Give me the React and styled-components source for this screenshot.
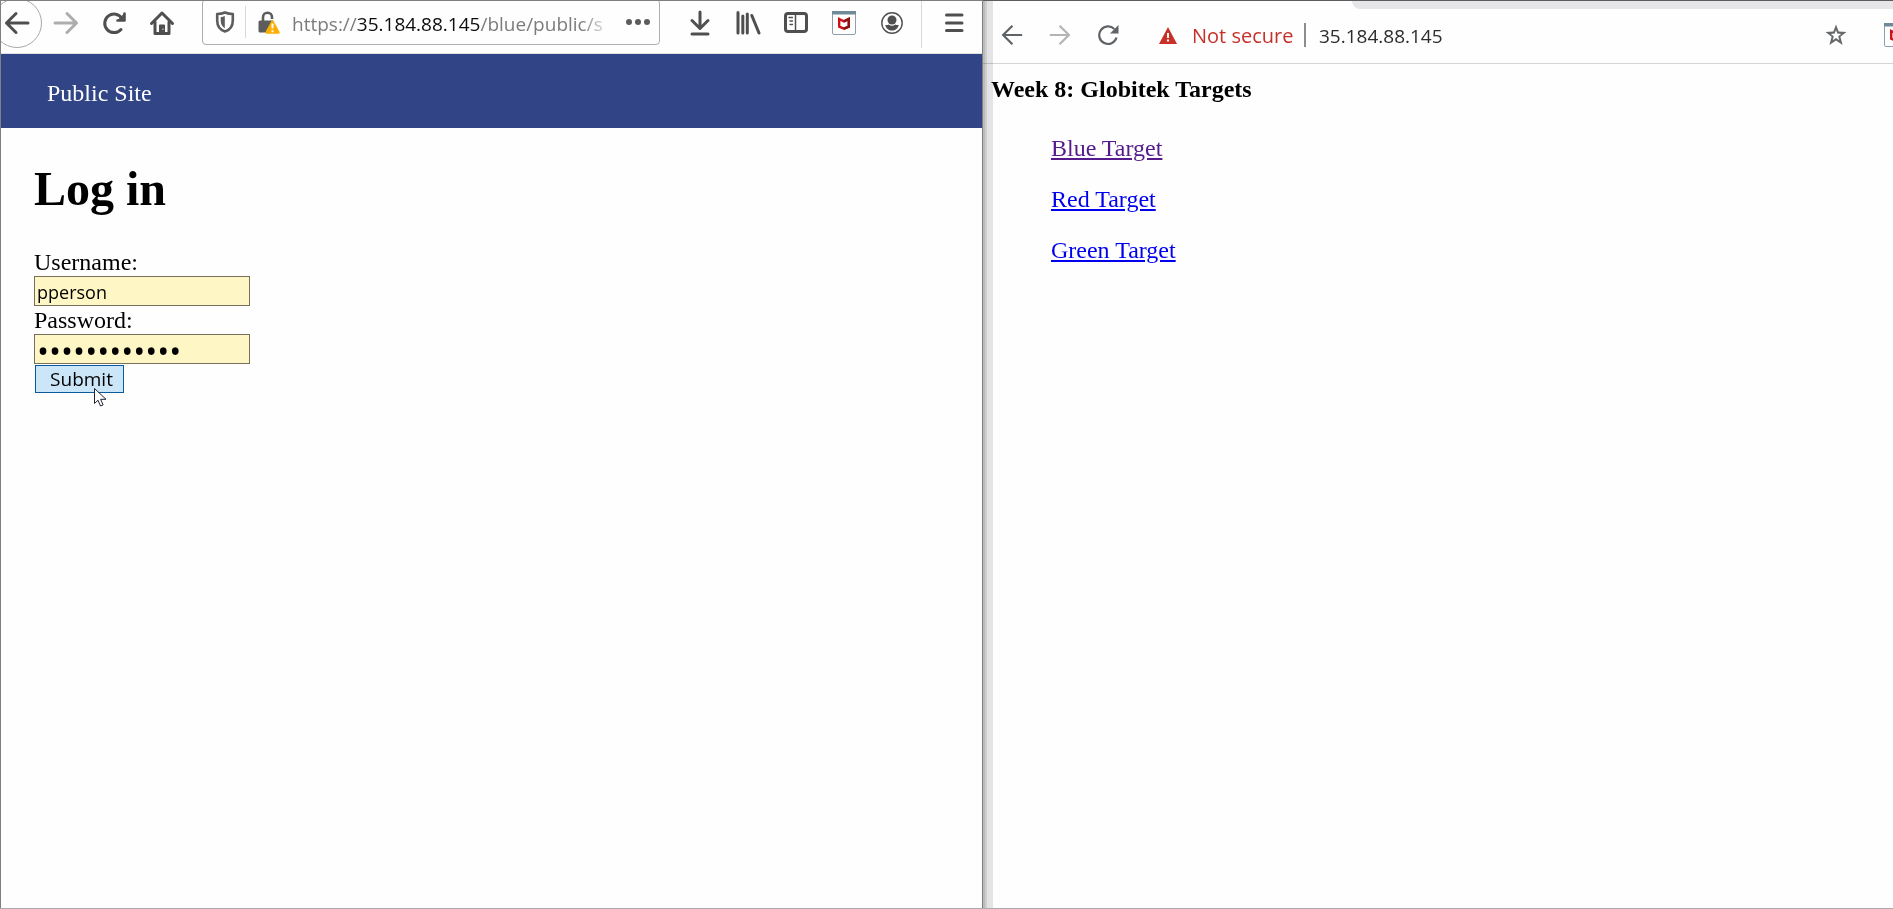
import React from "react";
import styled, { createGlobalStyle } from "styled-components";

const serif = '"Liberation Serif", "Times New Roman", serif';
const sans = '"Open Sans", "Noto Sans", sans-serif';

const GlobalStyle = createGlobalStyle`
  *, *::before, *::after { box-sizing: border-box; }
  html, body { margin: 0; background: #fefefe; }
  body { font-family: ${serif}; font-size: 24px; line-height: 28px; color: #000; }
`;

const Desktop = styled.div`
  display: flex;
  min-height: 100vh;
  overflow: hidden;
  border-bottom: 1px solid #aaa;
`;

const FirefoxWindow = styled.section`
  flex: 982 1 0;
  min-width: 0;
  border: solid #7f7f7f;
  border-width: 1px 1px 0 1px;
  overflow: hidden;
`;

const ChromeWindow = styled.section`
  position: relative;
  flex: 911 1 0;
  min-width: 0;
  border-top: 1px solid #5f5b5e;
  overflow: hidden;

  &::before {
    content: "";
    position: absolute;
    inset: 0 auto 0 0;
    width: 10px;
    background: linear-gradient(to right, #bdbdbe 2px, #cfcfd0 2px 4px, #e5e5e8 4px);
    mix-blend-mode: multiply;
    pointer-events: none;
  }
`;

const FirefoxBar = styled.header`
  display: flex;
  height: 53px;
  padding-right: 4px;
  border-bottom: 1px solid #e0e0e2;
`;

const ChromeBar = styled.header`
  display: flex;
  align-items: center;
  height: 63px;
  padding: 6px 0 0 5px;
  border-bottom: 1px solid #d4d5d7;
`;

const TabStrip = styled.div`
  position: absolute;
  top: 0;
  right: 0;
  width: 541px;
  height: 8px;
  background: #e6e6e9;
  border-bottom-left-radius: 8px;
`;

const ToolButton = styled.button`
  display: flex;
  align-items: center;
  justify-content: center;
  flex: none;
  width: 48px;
  height: 44px;
  padding: 0;
  border: 0;
  background: none;
  color: ${(p) => p.$color || "#4f4f50"};
  svg { display: block; flex: none; }
`;

const BackButton = styled(ToolButton)`
  width: 50px;
  height: 50px;
  margin: -3px 0 0 -9px;
  border: 1px solid #a8a8a9;
  border-radius: 50%;
`;

const Divider = styled.span`
  flex: none;
  width: ${(p) => p.$width || 1}px;
  height: ${(p) => p.$height}px;
  margin: ${(p) => p.$margin};
  background: ${(p) => p.$color || "#d8d8da"};
`;

const AddressBox = styled.div`
  display: flex;
  align-items: center;
  flex: 1;
  min-width: 0;
  height: 46px;
  margin: -2px 16px 0;
  padding-left: 12px;
  border: 1px solid #aeaeb0;
  border-radius: 4px;
  color: #5c5c5d;
  > svg { flex: none; }
`;

const Address = styled.div`
  flex: 1;
  min-width: 0;
  margin-left: 12px;
  padding-top: 3px;
  white-space: nowrap;
  font: 19px/28px ${sans};
  color: #7c7c7d;
  mask-image: linear-gradient(to left, transparent, #000 32px);
  strong { font-weight: 400; color: #0c0c0d; }
`;

const MoreButton = styled(ToolButton)`
  width: 42px;
  margin-left: 4px;
  color: #5c5c5d;
`;

const SiteNav = styled.nav`
  padding: 25px 46px 21px;
  background: #304486;
  a { color: #fff; text-decoration: none; }
`;

const LoginPage = styled.main`
  padding: 0 33px;
  h1 { margin: 33px 0 31px; font-size: 48px; line-height: 56px; }
`;

const LoginForm = styled.form`
  display: flex;
  flex-direction: column;
  align-items: flex-start;
`;

const Field = styled.input`
  width: 216px;
  height: 30px;
  padding: 2px 2px 0;
  border: 1px solid #7a705a;
  border-radius: 0;
  outline: 0;
  background: #fff6c5;
  color: #000;
  font: 18px/26px ${sans};
  &[type="password"] { font-size: 32px; }
`;

const SubmitRow = styled.div`
  position: relative;
  padding: 1px;
`;

const SubmitButton = styled.button`
  display: block;
  width: 89px;
  height: 28px;
  padding: 1px 10px 0 14px;
  border: 1px solid #0a5a9e;
  background: #cce6f9;
  color: #000;
  font: 19px/25px ${sans};
`;

const Pointer = styled.svg`
  position: absolute;
  left: 60px;
  top: 24px;
`;

const Security = styled.span`
  width: 112px;
  padding-top: 2px;
  margin-left: 15px;
  font: 20px/28px ${sans};
  color: #c5302a;
`;

const ChromeAddress = styled.input`
  flex: 1;
  min-width: 0;
  padding: 2px 0 0;
  border: 0;
  outline: 0;
  background: none;
  color: #2b2c2e;
  font: 19px/28px ${sans};
`;

const Extension = styled(ToolButton)`
  width: 9px;
  margin-left: 24px;
  justify-content: flex-start;
`;

const TargetPage = styled.main`
  padding: 11px 8px;
  h1 { margin: 0; font-size: 24px; line-height: 28px; }
`;

const TargetList = styled.ul`
  display: flex;
  flex-direction: column;
  gap: 23px;
  margin: 31px 0 0;
  padding: 0 0 0 60px;
  list-style: none;
`;

const TargetLink = styled.a`
  color: ${(p) => (p.$visited ? "#551a8b" : "#0000ee")};
  text-decoration: underline;
`;

const Stroke = ({ size = 26, width = 3, children, ...rest }) => (
  <svg width={size} height={size} viewBox="0 0 26 26" fill="none" stroke="currentColor"
    strokeWidth={width} strokeLinecap="round" strokeLinejoin="round" aria-hidden="true" {...rest}>
    {children}
  </svg>
);

const ArrowLeft = () => <Stroke><path d="M24 13H2.500M12 3.500L2.500 13l9.500 9.500" /></Stroke>;
const ArrowRight = () => <Stroke><path d="M2 13h21.500M14 3.500l9.500 9.500-9.500 9.500" /></Stroke>;

const Reload = () => (
  <Stroke>
    <path d="M20 19.500A9.300 9.300 0 1 1 21 8.500" />
    <path d="M23.500 3.500v7H16.500" strokeWidth="2.600" />
    <path d="M23.500 4v6.500H17z" fill="currentColor" strokeWidth="1" />
  </Stroke>
);

const Home = () => (
  <Stroke>
    <path d="M2.500 13.500L13 3l10.500 10.500" />
    <path d="M6 12v11.500h14V12" />
    <path d="M10.500 23v-8h5v8z" fill="currentColor" strokeWidth="1" />
    <path d="M14 19v.5" stroke="#fff" strokeWidth="1" />
  </Stroke>
);

const Shield = () => (
  <svg width="20" height="22" viewBox="0 0 20 22" fill="none" aria-hidden="true">
    <path d="M10 1.500c3 1.200 5 1.500 7.800 1.500v6.500c0 5.500-3 9.500-7.800 11-4.800-1.500-7.800-5.500-7.800-11V3c2.800 0 4.800-.3 7.800-1.500z" stroke="currentColor" strokeWidth="2.600" strokeLinejoin="round" />
    <path d="M9.800 5v12.200C7 15.700 5.700 13 5.700 9.800V6.300c1.500-.2 2.800-.6 4.100-1.300z" fill="currentColor" />
  </svg>
);

const InsecureLock = () => (
  <svg width="22" height="24" viewBox="0 0 22 24" fill="none" aria-hidden="true">
    <path d="M5 11V7.200a4.500 4.500 0 0 1 9 0V9" stroke="currentColor" strokeWidth="2.600" />
    <path d="M2 10.500h13v12H2a1.500 1.500 0 0 1-1.500-1.500v-9A1.500 1.500 0 0 1 2 10.500z" fill="currentColor" />
    <path d="M14.500 11.500l6 11h-12z" fill="#fcae00" stroke="#fcae00" strokeWidth="2.500" strokeLinejoin="round" />
    <path d="M14.500 13.500v5M14.500 20.300v2" stroke="#fff" strokeWidth="2" />
  </svg>
);

const Dots = () => (
  <svg width="24" height="6" viewBox="0 0 24 6" fill="currentColor" aria-hidden="true">
    <circle cx="3" cy="3" r="3" /><circle cx="12" cy="3" r="3" /><circle cx="21" cy="3" r="3" />
  </svg>
);

const Download = () => <Stroke><path d="M13 2v15.500M5 10.500l8 8 8-8M5 24h16" /></Stroke>;

const Library = () => (
  <Stroke><path d="M3 2.500v20.500M7.800 6v17M12.300 4v19" /><path d="M16.800 5.500L24 23" /></Stroke>
);

const SidebarIcon = () => (
  <Stroke>
    <rect x="2.500" y="3.500" width="21" height="18" rx="2.500" />
    <path d="M12.500 4v17" strokeWidth="1.500" />
    <path d="M6 7.500h3.500M7 11h2.500M7 14.500h2.500" strokeWidth="1.300" />
  </Stroke>
);

const McAfee = () => (
  <svg width="24" height="24" viewBox="0 0 24 24" aria-hidden="true">
    <rect x=".5" y=".5" width="23" height="23" rx="1.500" fill="#fff" stroke="#90a0aa" />
    <path d="M0 0h24v3.500H0z" fill="#6f8b99" />
    <path d="M7.200 8l4.800 2.300 4.800-2.300v7.700L12 17.600l-4.800-1.900z" fill="none" stroke="#cc1119" strokeWidth="2.400" />
    <path d="M12 10.300l4.800-2.300v7.700L12 17.600" fill="none" stroke="#8e1116" strokeWidth="2.400" />
  </svg>
);

const Account = () => (
  <svg width="24" height="24" viewBox="0 0 24 24" aria-hidden="true">
    <circle cx="12" cy="12" r="10.200" fill="none" stroke="currentColor" strokeWidth="1.400" />
    <circle cx="12" cy="9" r="4.500" fill="currentColor" />
    <path d="M5.300 14c1.300.2 2.700 0 3.500-.5 2 1.600 4.400 1.600 6.400 0 .8.500 2.200.7 3.500.5-.5 3.500-3.500 5.500-6.700 5.500S5.800 17.500 5.300 14z" fill="currentColor" />
  </svg>
);

const Menu = () => <Stroke><path d="M5.500 5h15.500M5.500 13h15.500M5.500 20.500h15.500" /></Stroke>;

const ThinLeft = () => <Stroke size={22} strokeLinecap="butt" strokeLinejoin="miter" width={2.600}><path d="M25 13H3M13.500 2L2.500 13l11 11" /></Stroke>;
const ThinRight = () => <Stroke size={22} strokeLinecap="butt" strokeLinejoin="miter" width={2.600}><path d="M1 13h22M12.500 2l11 11-11 11" /></Stroke>;

const ChromeReload = () => (
  <svg width="22" height="22" viewBox="0 0 22 22" fill="none" aria-hidden="true">
    <path d="M19.500 13.500A8.800 8.800 0 1 1 17.300 5" stroke="currentColor" strokeWidth="2.200" />
    <path d="M21.500 1v8.500H13z" fill="currentColor" />
  </svg>
);

const Warning = () => (
  <svg width="18" height="17" viewBox="0 0 18 17" aria-hidden="true">
    <path d="M9 0l9 17H0z" fill="#c93027" />
    <path d="M9 6v5M9 12.500v2" stroke="#fff" strokeWidth="2" />
  </svg>
);

const Star = () => (
  <svg width="22" height="22" viewBox="0 0 22 22" fill="currentColor" aria-hidden="true">
    <path fillRule="evenodd" d="M11 .5l2.700 7.100 7.800.4-6.100 4.800 2.200 8.200-6.600-4.500L4.400 21l2.200-8.200L.5 8l7.800-.4zM11 6l-1.300 3.600-3.900.3 3 2.400-1.100 4L11 14.100l3.300 2.200-1.100-4 3-2.400-3.900-.3z" />
  </svg>
);

export default function App() {
  return (
    <>
      <GlobalStyle />
      <Desktop>
        <FirefoxWindow>
          <FirefoxBar>
            <BackButton aria-label="Back"><ArrowLeft /></BackButton>
            <ToolButton aria-label="Forward" $color="#adadae"><ArrowRight /></ToolButton>
            <ToolButton aria-label="Reload"><Reload /></ToolButton>
            <ToolButton aria-label="Home"><Home /></ToolButton>
            <AddressBox>
              <Shield />
              <Divider $height={32} $margin="0 12px 0 10px" />
              <InsecureLock />
              <Address>https://<strong>35.184.88.145</strong>/blue/public/s</Address>
              <MoreButton aria-label="Page actions"><Dots /></MoreButton>
            </AddressBox>
            <ToolButton aria-label="Downloads"><Download /></ToolButton>
            <ToolButton aria-label="Library"><Library /></ToolButton>
            <ToolButton aria-label="Sidebars"><SidebarIcon /></ToolButton>
            <ToolButton aria-label="McAfee"><McAfee /></ToolButton>
            <ToolButton aria-label="Account"><Account /></ToolButton>
            <Divider $height={47} $margin="0 8px 0 5px" />
            <ToolButton aria-label="Menu"><Menu /></ToolButton>
          </FirefoxBar>
          <SiteNav><a href="#public">Public Site</a></SiteNav>
          <LoginPage>
            <h1>Log in</h1>
            <LoginForm onSubmit={(e) => e.preventDefault()}>
              <label htmlFor="username">Username:</label>
              <Field id="username" defaultValue="pperson" />
              <label htmlFor="password">Password:</label>
              <Field id="password" type="password" defaultValue="abcdefghijkl" />
              <SubmitRow>
                <SubmitButton type="submit">Submit</SubmitButton>
                <Pointer width="13" height="19" viewBox="0 0 13 19" aria-hidden="true">
                  <path d="M.5.5v15l3.500-3.300 2.500 5.800 2.600-1.100-2.500-5.600H12z" fill="#fff" stroke="#223" strokeWidth="1" />
                </Pointer>
              </SubmitRow>
            </LoginForm>
          </LoginPage>
        </FirefoxWindow>
        <ChromeWindow>
          <TabStrip />
          <ChromeBar>
            <ToolButton aria-label="Back" $color="#5f6368"><ThinLeft /></ToolButton>
            <ToolButton aria-label="Forward" $color="#b2b4b6"><ThinRight /></ToolButton>
            <ToolButton aria-label="Reload" $color="#5f6368"><ChromeReload /></ToolButton>
            <Divider $height={0} $margin="0 13px" />
            <Warning />
            <Security>Not secure</Security>
            <Divider $width={2} $height={24} $margin="0 13px 0 0" $color="#8c8d90" />
            <ChromeAddress aria-label="Address" defaultValue="35.184.88.145" />
            <ToolButton aria-label="Bookmark" $color="#66696c"><Star /></ToolButton>
            <Extension aria-label="McAfee"><McAfee /></Extension>
          </ChromeBar>
          <TargetPage>
            <h1>Week 8: Globitek Targets</h1>
            <TargetList>
              <li><TargetLink $visited href="#blue">Blue Target</TargetLink></li>
              <li><TargetLink href="#red">Red Target</TargetLink></li>
              <li><TargetLink href="#green">Green Target</TargetLink></li>
            </TargetList>
          </TargetPage>
        </ChromeWindow>
      </Desktop>
    </>
  );
}
